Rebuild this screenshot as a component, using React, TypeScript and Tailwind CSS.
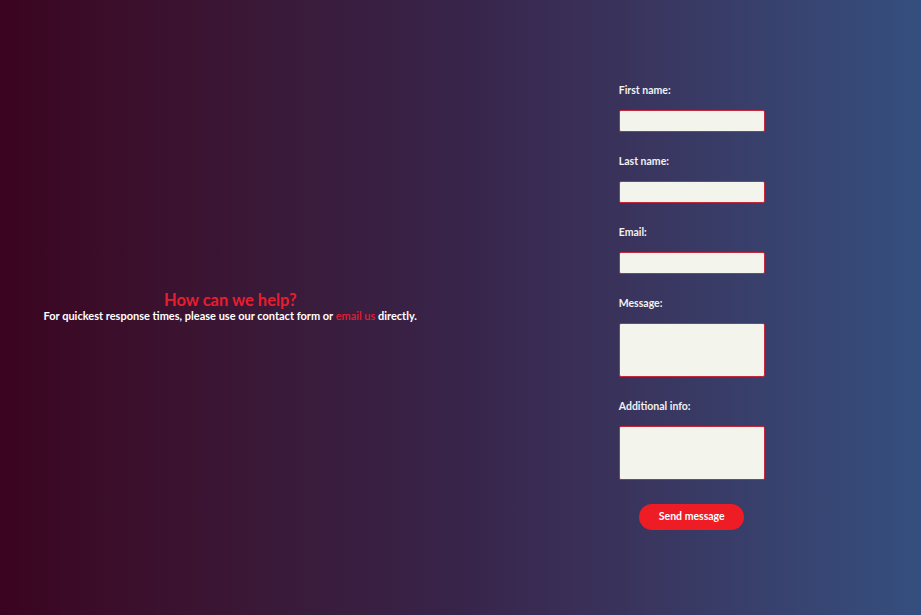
import React from "react";

const fields = [
  { label: "First name:", tall: false },
  { label: "Last name:", tall: false },
  { label: "Email:", tall: false },
  { label: "Message:", tall: true },
  { label: "Additional info:", tall: true },
];

export default function App() {
  return (
    <div
      className="h-[615px] w-full grid grid-cols-2 bg-gradient-to-r from-[#3a0420] via-[#38244a] to-[#344f7f]"
      style={{ fontFamily: "Lato, 'Noto Sans', sans-serif" }}
    >
      <div className="flex flex-col items-center justify-center pb-[2px]">
        <h1 className="text-[16.5px] leading-[18px] font-bold text-[#e61e2d]">How can we help?</h1>
        <p className="text-[11px] leading-[14px] font-bold text-white">
          For quickest response times, please use our contact form or{" "}
          <span className="text-[#e61e2d] font-semibold">email us</span> directly.
        </p>
      </div>
      <div className="flex items-center justify-center pb-[4px] pl-[2px]">
        <form className="w-[146px] flex flex-col" onSubmit={(e) => e.preventDefault()}>
          {fields.map((f, i) => (
            <div key={f.label} className={i === 0 ? "" : "mt-[21px]"}>
              <label className="block text-[10.5px] leading-[16px] font-bold text-[#f1f1f1]">{f.label}</label>
              {f.tall ? (
                <textarea className="mt-[12px] block w-[146px] h-[54px] bg-[#f3f5ec] border border-[#c4283c] rounded-[2px] resize-none outline-none" />
              ) : (
                <input className="mt-[12px] block w-[146px] h-[22px] bg-[#f3f5ec] border border-[#c4283c] rounded-[2px] outline-none" />
              )}
            </div>
          ))}
          <button
            type="submit"
            className="mt-[24px] self-center w-[105px] h-[26px] rounded-full bg-[#ee1c25] text-white text-[10.5px] font-bold"
          >
            Send message
          </button>
        </form>
      </div>
    </div>
  );
}
